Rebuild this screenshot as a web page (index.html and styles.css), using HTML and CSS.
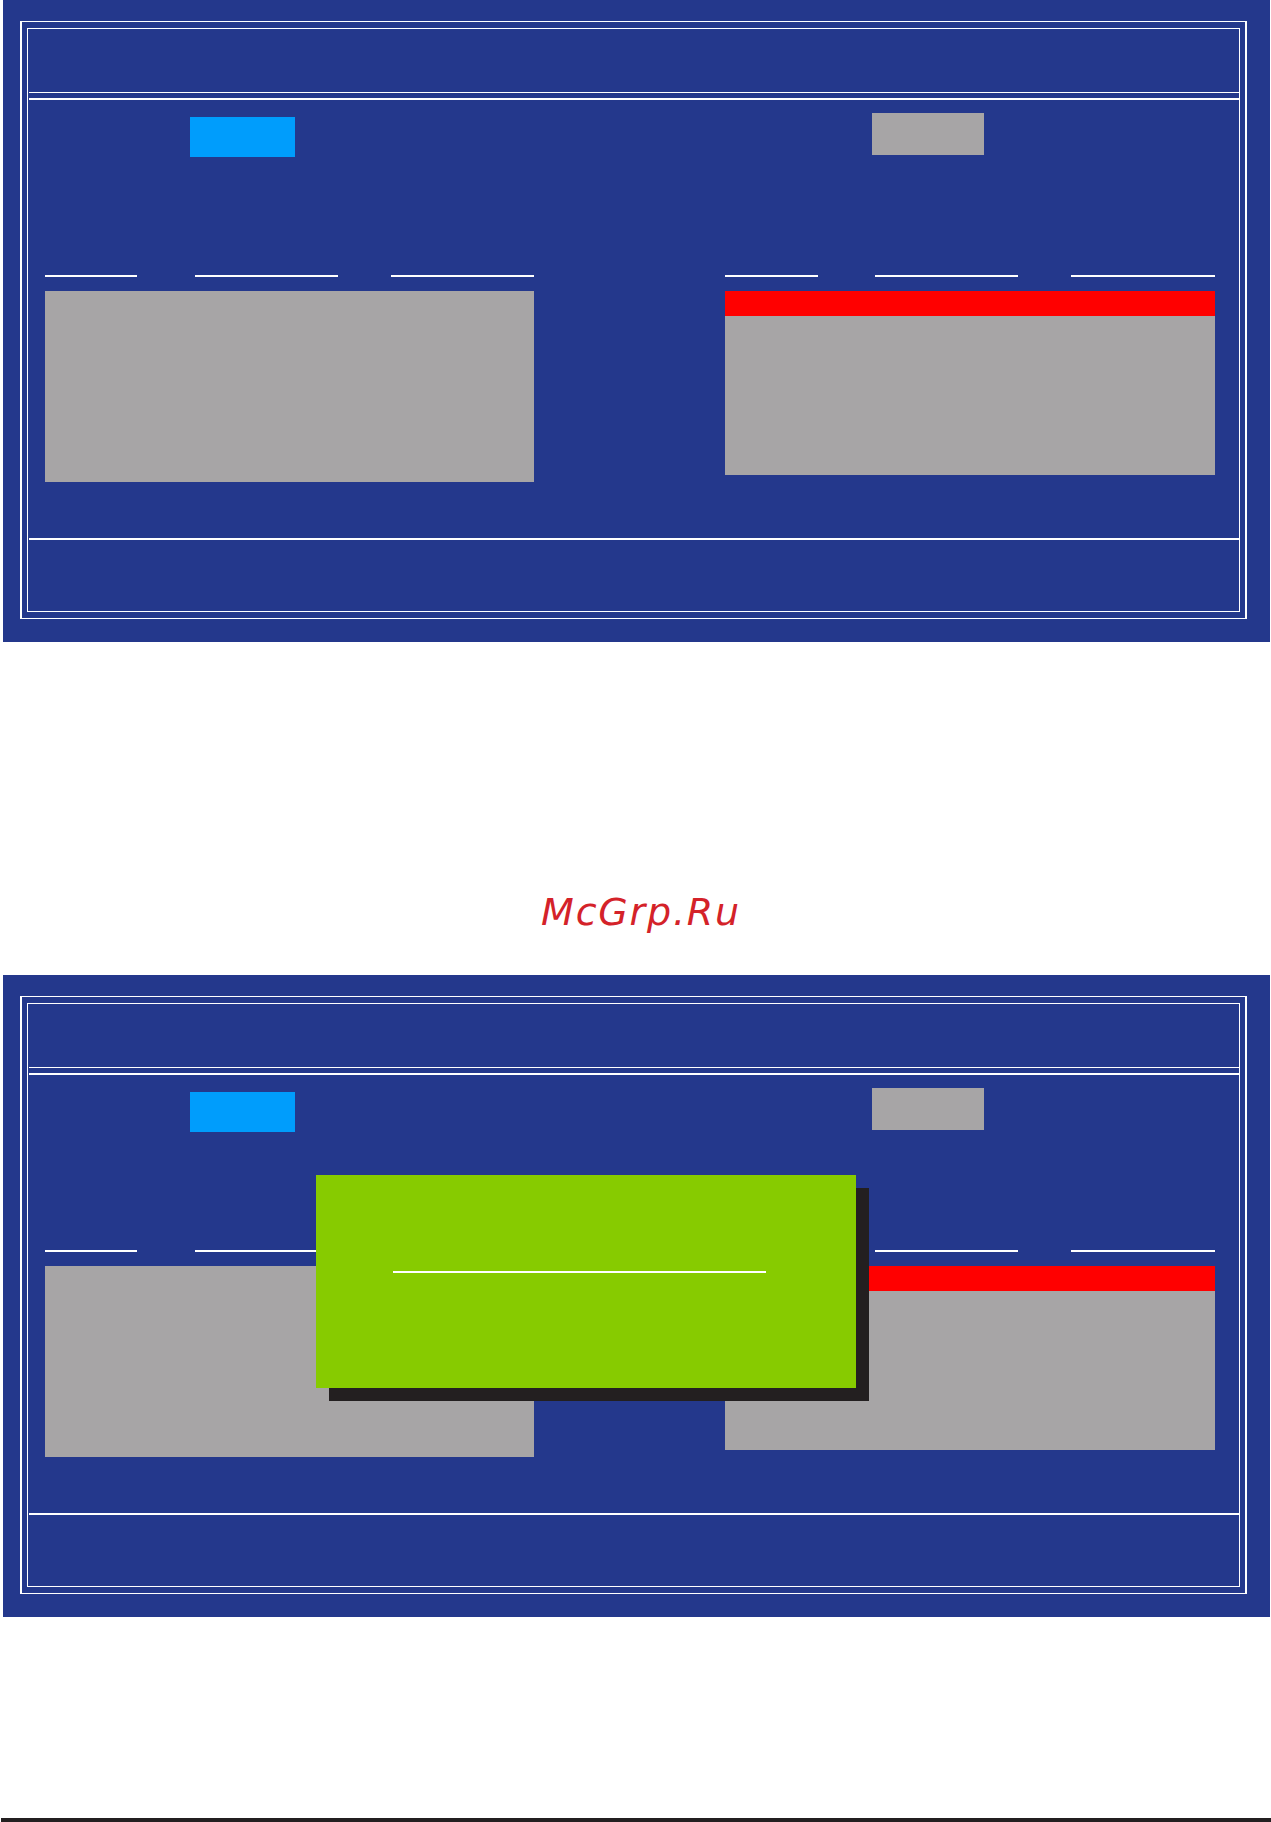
FILE: index.html
```html
<!DOCTYPE html>
<html lang="ru">
<head>
<meta charset="utf-8">
<title>RAID utility screens</title>
<link rel="stylesheet" href="styles.css">
</head>
<body>
<div class="page">
  <section class="bios">
    <div class="frame-outer">
      <div class="frame-inner">
        <div class="hdr"></div>
        <div class="sep sep-thin"></div>
        <div class="sep sep-thick sep-gap"></div>
        <div class="main">
          <div class="col col-left">
            <div class="btn-row"><span class="btn btn-cyan"></span></div>
            <div class="rules rules-left"><span class="r1"></span><span class="r2"></span><span class="r3"></span></div>
            <div class="box box-left"></div>
          </div>
          <div class="col col-right">
            <div class="btn-row"><span class="btn btn-gray"></span></div>
            <div class="rules rules-right"><span class="r1"></span><span class="r2"></span><span class="r3"></span></div>
            <div class="box box-right"><div class="box-hl"></div></div>
          </div>
        </div>
        <div class="sep sep-thick"></div>
        <div class="ftr"></div>
      </div>
    </div>
  </section>

  <div class="watermark">McGrp.Ru</div>

  <section class="bios">
    <div class="frame-outer">
      <div class="frame-inner">
        <div class="hdr"></div>
        <div class="sep sep-thin"></div>
        <div class="sep sep-thick sep-gap"></div>
        <div class="main">
          <div class="col col-left">
            <div class="btn-row"><span class="btn btn-cyan"></span></div>
            <div class="rules rules-left"><span class="r1"></span><span class="r2"></span><span class="r3"></span></div>
            <div class="box box-left"></div>
          </div>
          <div class="col col-right">
            <div class="btn-row"><span class="btn btn-gray"></span></div>
            <div class="rules rules-right"><span class="r1"></span><span class="r2"></span><span class="r3"></span></div>
            <div class="box box-right"><div class="box-hl"></div></div>
          </div>
        </div>
        <div class="sep sep-thick"></div>
        <div class="ftr"></div>
      </div>
    </div>
    <div class="dialog"><div class="dialog-line"></div></div>
  </section>

  <div class="page-rule"></div>
</div>
</body>
</html>
```

FILE: styles.css
```css
html, body {
  margin: 0;
  padding: 0;
  background: #ffffff;
}

body {
  font-family: "DejaVu Sans", "Liberation Sans", sans-serif;
}

.page {
  width: 1271px;
  height: 1822px;
  overflow: hidden;
}

.bios {
  position: relative;
  margin-left: 3px;
  width: 1267px;
  height: 642px;
  background: #24388c;
  padding: 21px 23px 0 17px;
  box-sizing: border-box;
}

.frame-outer {
  width: 1227px;
  height: 598px;
  border-style: solid;
  border-color: #ffffff;
  border-width: 1px 2px;
  padding: 6px 5px;
  box-sizing: border-box;
}

.frame-inner {
  height: 100%;
  border: 1px solid #ffffff;
  box-sizing: border-box;
  display: flex;
  flex-direction: column;
}

.hdr {
  height: 63px;
  flex: none;
}

.sep {
  flex: none;
  margin-left: 1px;
  background: #ffffff;
}

.sep-thin {
  height: 1px;
}

.sep-thick {
  height: 2px;
}

.sep-gap {
  margin-top: 5px;
}

.main {
  flex: 1;
  display: flex;
  gap: 191px;
  padding-left: 17px;
}

.col {
  display: flex;
  flex-direction: column;
}

.col-left {
  width: 489px;
}

.col-right {
  width: 490px;
}

.btn-row {
  height: 175px;
}

.btn {
  display: block;
}

.btn-cyan {
  margin: 17px 0 0 145px;
  width: 105px;
  height: 40px;
  background: #009dfc;
}

.btn-gray {
  margin: 13px 0 0 147px;
  width: 112px;
  height: 42px;
  background: #a7a5a6;
}

.rules {
  display: flex;
  height: 2px;
}

.rules span {
  display: block;
  height: 2px;
  background: #ffffff;
}

.rules-left .r1 { width: 92px; }
.rules-left .r2 { width: 143px; margin-left: 58px; }
.rules-left .r3 { width: 143px; margin-left: 53px; }

.rules-right .r1 { width: 93px; }
.rules-right .r2 { width: 143px; margin-left: 57px; }
.rules-right .r3 { width: 144px; margin-left: 53px; }

.box {
  margin-top: 14px;
  background: #a7a5a6;
}

.box-left {
  height: 191px;
}

.box-right {
  height: 184px;
}

.box-hl {
  height: 25px;
  background: #ff0000;
}

.ftr {
  height: 71px;
  flex: none;
}

.watermark {
  height: 333px;
  padding: 248px 0 0 11px;
  box-sizing: border-box;
  text-align: center;
  font-family: "DejaVu Sans", sans-serif;
  font-style: italic;
  font-size: 38px;
  line-height: 44px;
  letter-spacing: 1.8px;
  color: #d42229;
}

.dialog {
  position: absolute;
  left: 313px;
  top: 200px;
  width: 540px;
  height: 213px;
  background: #87cb00;
  box-shadow: 13px 13px 0 #231f20;
  padding: 96px 0 0 77px;
  box-sizing: border-box;
}

.dialog-line {
  width: 373px;
  height: 2px;
  background: #ffffff;
}

.page-rule {
  margin: 201px 0 0 1px;
  height: 4px;
  background: #231f20;
}
```
